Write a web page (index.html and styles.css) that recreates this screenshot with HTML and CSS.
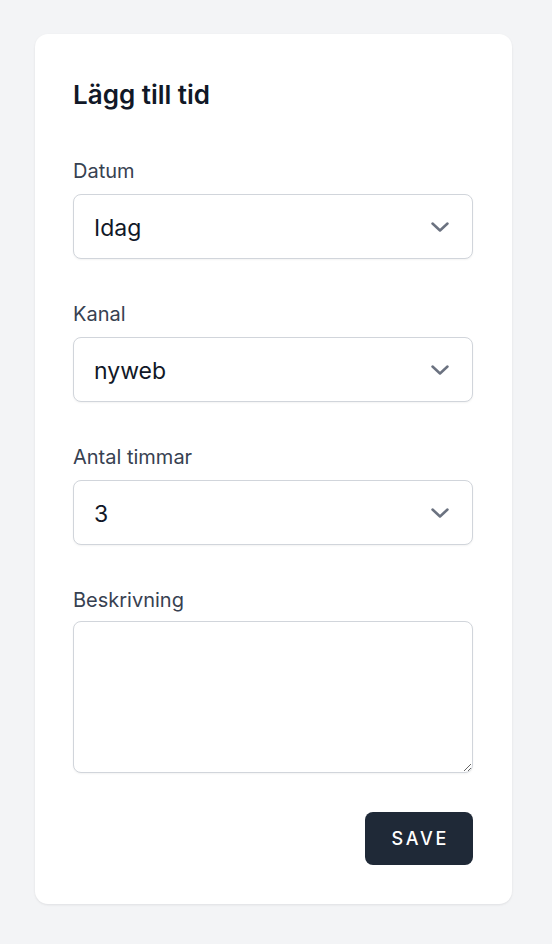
FILE: index.html
```html
<!DOCTYPE html>
<html lang="sv">
<head>
<meta charset="utf-8">
<title>Lägg till tid</title>
<link rel="stylesheet" href="styles.css">
</head>
<body>
<main class="page">
  <form class="card">
    <h1 class="title">Lägg till tid</h1>

    <div class="field">
      <label class="label">Datum</label>
      <div class="select">
        <span class="select-value">Idag</span>
        <svg class="chevron" viewBox="0 0 18 10" width="18" height="10" aria-hidden="true"><polyline points="1.5,1.5 9,8.5 16.5,1.5"/></svg>
      </div>
    </div>

    <div class="field">
      <label class="label">Kanal</label>
      <div class="select">
        <span class="select-value">nyweb</span>
        <svg class="chevron" viewBox="0 0 18 10" width="18" height="10" aria-hidden="true"><polyline points="1.5,1.5 9,8.5 16.5,1.5"/></svg>
      </div>
    </div>

    <div class="field">
      <label class="label">Antal timmar</label>
      <div class="select">
        <span class="select-value">3</span>
        <svg class="chevron" viewBox="0 0 18 10" width="18" height="10" aria-hidden="true"><polyline points="1.5,1.5 9,8.5 16.5,1.5"/></svg>
      </div>
    </div>

    <div class="field">
      <label class="label">Beskrivning</label>
      <textarea class="textarea"></textarea>
    </div>

    <div class="actions">
      <button type="button" class="btn">SAVE</button>
    </div>
  </form>
</main>
</body>
</html>
```

FILE: styles.css
```css
* {
  box-sizing: border-box;
}

html, body {
  margin: 0;
  padding: 0;
  background: #f3f4f6;
}

body {
  font-family: Inter, "Noto Sans", "Liberation Sans", sans-serif;
  color: #111827;
}

.page {
  padding: 34px 0 40px 35px;
}

.card {
  width: 477px;
  background: #ffffff;
  border-radius: 13px;
  box-shadow: 0 1px 3px rgba(15, 23, 42, 0.06), 0 1px 2px rgba(15, 23, 42, 0.03);
  padding: 45px 39px 39px 38px;
  display: flex;
  flex-direction: column;
}

.title {
  margin: 0;
  font-size: 26px;
  line-height: 32px;
  font-weight: 600;
  color: #111827;
}

.field {
  display: flex;
  flex-direction: column;
  margin-top: 41px;
}

.title + .field {
  margin-top: 46px;
}

.label {
  font-size: 20px;
  line-height: 28px;
  font-weight: 400;
  color: #374151;
  margin-bottom: 9px;
}

.select {
  height: 65px;
  border: 1px solid #d1d5db;
  border-radius: 8px;
  box-shadow: 0 1px 2px rgba(0, 0, 0, 0.05);
  background: #ffffff;
  display: flex;
  align-items: center;
  justify-content: space-between;
  padding: 3px 23px 0 20px;
}

.select-value {
  font-size: 23px;
  line-height: 28px;
  color: #111827;
}

.chevron {
  display: block;
  fill: none;
  stroke: #6b7280;
  stroke-width: 2.5;
  stroke-linecap: round;
  stroke-linejoin: round;
  margin-top: -3px;
}

.textarea {
  display: block;
  width: 100%;
  height: 152px;
  margin-top: -2px;
  border: 1px solid #d1d5db;
  border-radius: 8px;
  box-shadow: 0 1px 2px rgba(0, 0, 0, 0.05);
  background: #ffffff;
  font-family: inherit;
  font-size: 20px;
  padding: 10px 16px;
  resize: vertical;
  outline: none;
}

.actions {
  display: flex;
  justify-content: flex-end;
  margin-top: 39px;
}

.btn {
  height: 53px;
  padding: 0 24px 0 27px;
  border: none;
  border-radius: 8px;
  background: #1f2937;
  color: #ffffff;
  font-family: inherit;
  font-size: 18px;
  font-weight: 500;
  letter-spacing: 0.15em;
  display: flex;
  align-items: center;
  cursor: pointer;
}
```
